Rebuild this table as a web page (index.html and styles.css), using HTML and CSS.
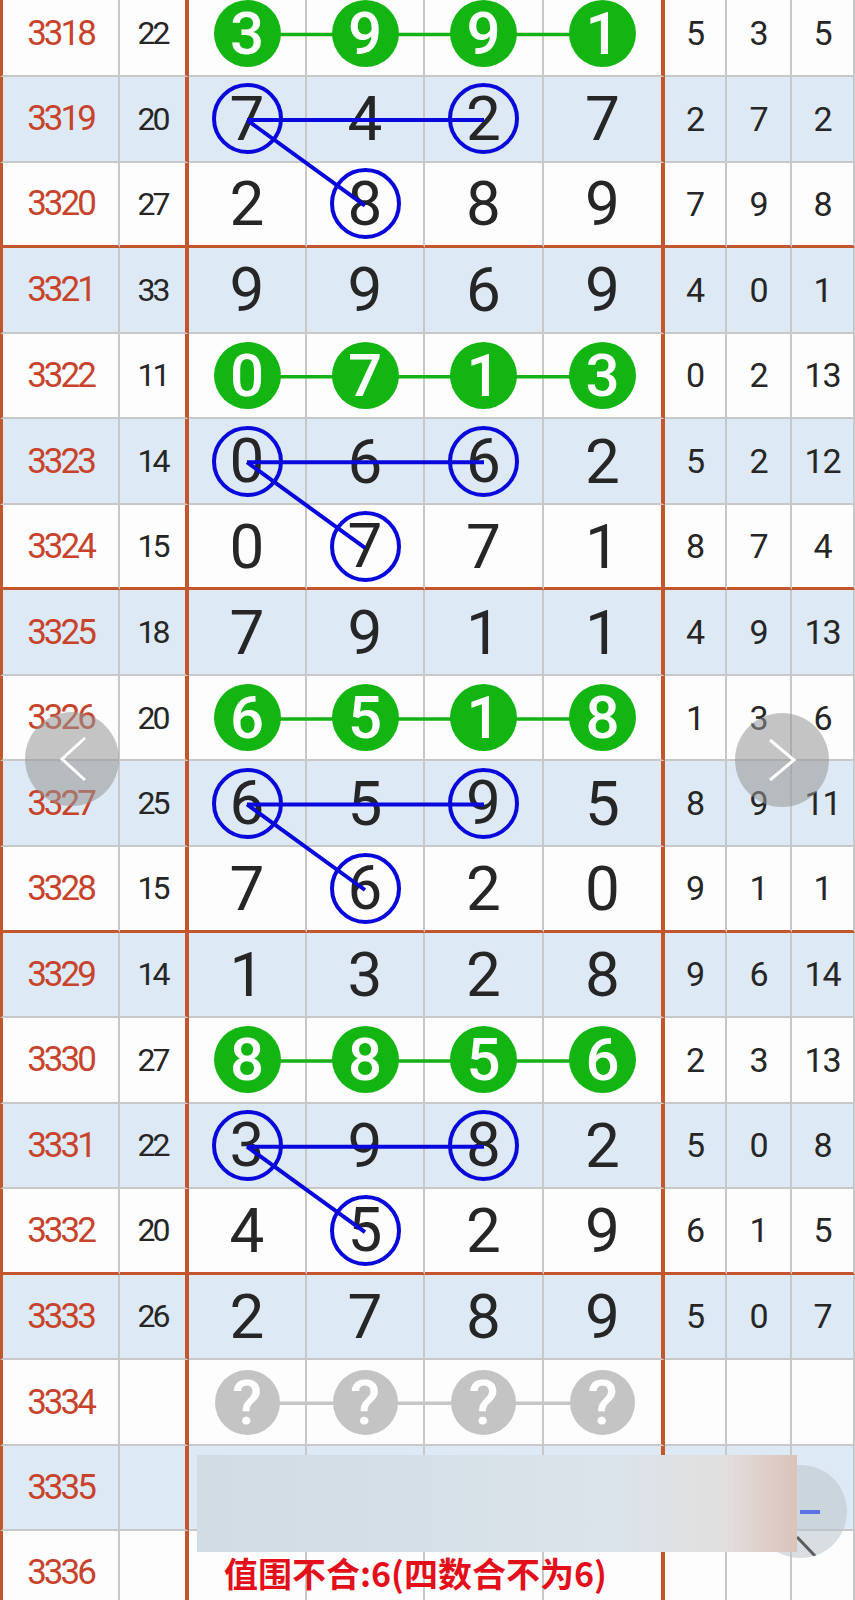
FILE: index.html
```html
<!DOCTYPE html>
<html lang="zh-CN">
<head>
    <meta charset="UTF-8">
    <meta name="viewport" content="width=device-width, initial-scale=1.0">
    <title>走势图</title>
    <link rel="stylesheet" href="styles.css">
</head>
<body>
    <div class="chart-wrap">
        <div class="chart">
            <div class="row"><div class="no">3318</div><div class="sum">22</div><div class="d"><span class="ball">3</span></div><div class="d"><span class="ball">9</span></div><div class="d"><span class="ball">9</span></div><div class="d last"><span class="ball">1</span></div><div class="s">5</div><div class="s">3</div><div class="s">5</div></div>
            <div class="row alt"><div class="no">3319</div><div class="sum">20</div><div class="d"><span class="ring">7</span></div><div class="d">4</div><div class="d"><span class="ring">2</span></div><div class="d last">7</div><div class="s">2</div><div class="s">7</div><div class="s">2</div></div>
            <div class="row end"><div class="no">3320</div><div class="sum">27</div><div class="d">2</div><div class="d"><span class="ring">8</span></div><div class="d">8</div><div class="d last">9</div><div class="s">7</div><div class="s">9</div><div class="s">8</div></div>

            <div class="row alt"><div class="no">3321</div><div class="sum">33</div><div class="d">9</div><div class="d">9</div><div class="d">6</div><div class="d last">9</div><div class="s">4</div><div class="s">0</div><div class="s">1</div></div>
            <div class="row"><div class="no">3322</div><div class="sum">11</div><div class="d"><span class="ball">0</span></div><div class="d"><span class="ball">7</span></div><div class="d"><span class="ball">1</span></div><div class="d last"><span class="ball">3</span></div><div class="s">0</div><div class="s">2</div><div class="s">13</div></div>
            <div class="row alt"><div class="no">3323</div><div class="sum">14</div><div class="d"><span class="ring">0</span></div><div class="d">6</div><div class="d"><span class="ring">6</span></div><div class="d last">2</div><div class="s">5</div><div class="s">2</div><div class="s">12</div></div>
            <div class="row end"><div class="no">3324</div><div class="sum">15</div><div class="d">0</div><div class="d"><span class="ring">7</span></div><div class="d">7</div><div class="d last">1</div><div class="s">8</div><div class="s">7</div><div class="s">4</div></div>

            <div class="row alt"><div class="no">3325</div><div class="sum">18</div><div class="d">7</div><div class="d">9</div><div class="d">1</div><div class="d last">1</div><div class="s">4</div><div class="s">9</div><div class="s">13</div></div>
            <div class="row"><div class="no">3326</div><div class="sum">20</div><div class="d"><span class="ball">6</span></div><div class="d"><span class="ball">5</span></div><div class="d"><span class="ball">1</span></div><div class="d last"><span class="ball">8</span></div><div class="s">1</div><div class="s">3</div><div class="s">6</div></div>
            <div class="row alt"><div class="no">3327</div><div class="sum">25</div><div class="d"><span class="ring">6</span></div><div class="d">5</div><div class="d"><span class="ring">9</span></div><div class="d last">5</div><div class="s">8</div><div class="s">9</div><div class="s">11</div></div>
            <div class="row end"><div class="no">3328</div><div class="sum">15</div><div class="d">7</div><div class="d"><span class="ring">6</span></div><div class="d">2</div><div class="d last">0</div><div class="s">9</div><div class="s">1</div><div class="s">1</div></div>

            <div class="row alt"><div class="no">3329</div><div class="sum">14</div><div class="d">1</div><div class="d">3</div><div class="d">2</div><div class="d last">8</div><div class="s">9</div><div class="s">6</div><div class="s">14</div></div>
            <div class="row"><div class="no">3330</div><div class="sum">27</div><div class="d"><span class="ball">8</span></div><div class="d"><span class="ball">8</span></div><div class="d"><span class="ball">5</span></div><div class="d last"><span class="ball">6</span></div><div class="s">2</div><div class="s">3</div><div class="s">13</div></div>
            <div class="row alt"><div class="no">3331</div><div class="sum">22</div><div class="d"><span class="ring">3</span></div><div class="d">9</div><div class="d"><span class="ring">8</span></div><div class="d last">2</div><div class="s">5</div><div class="s">0</div><div class="s">8</div></div>
            <div class="row end"><div class="no">3332</div><div class="sum">20</div><div class="d">4</div><div class="d"><span class="ring">5</span></div><div class="d">2</div><div class="d last">9</div><div class="s">6</div><div class="s">1</div><div class="s">5</div></div>

            <div class="row alt"><div class="no">3333</div><div class="sum">26</div><div class="d">2</div><div class="d">7</div><div class="d">8</div><div class="d last">9</div><div class="s">5</div><div class="s">0</div><div class="s">7</div></div>
            <div class="row"><div class="no">3334</div><div class="sum"></div><div class="d"><span class="ball q">?</span></div><div class="d"><span class="ball q">?</span></div><div class="d"><span class="ball q">?</span></div><div class="d last"><span class="ball q">?</span></div><div class="s"></div><div class="s"></div><div class="s"></div></div>
            <div class="row alt"><div class="no">3335</div><div class="sum"></div><div class="d"></div><div class="d"></div><div class="d"></div><div class="d last"></div><div class="s"></div><div class="s"></div><div class="s"></div></div>
            <div class="row end"><div class="no">3336</div><div class="sum"></div><div class="d"></div><div class="d"></div><div class="d"></div><div class="d last"></div><div class="s"></div><div class="s"></div><div class="s"></div></div>
        </div>

        <!-- connecting lines between marked numbers -->
        <svg class="links" width="855" height="1626">
            <g stroke="#14b214" stroke-width="3.5">
                <path d="M247 42.5 H603"/>
                <path d="M247 384.7 H603"/>
                <path d="M247 726.9 H603"/>
                <path d="M247 1069.1 H603"/>
            </g>
            <path d="M247 1411.3 H603" stroke="#c6c6c6" stroke-width="3.5"/>
            <g stroke="#0808dc" stroke-width="4" fill="none">
                <path d="M247 128.05 H484 M247 128.05 L365 213.6"/>
                <path d="M247 470.25 H484 M247 470.25 L365 555.8"/>
                <path d="M247 812.45 H484 M247 812.45 L365 898"/>
                <path d="M247 1154.65 H484 M247 1154.65 L365 1240.2"/>
            </g>
        </svg>
    </div>

    <a class="nav prev"><svg width="94" height="94"><polyline points="60,26 37,47 60,68" fill="none" stroke="#fff" stroke-width="3"/></svg></a>
    <a class="nav next"><svg width="94" height="94"><polyline points="35,27 59,47 35,67" fill="none" stroke="#fff" stroke-width="3"/></svg></a>

    <div class="fab"><svg width="93" height="93"><path d="M46 47 H66" stroke="#5b72e0" stroke-width="4"/><path d="M43 72 L63 93" stroke="#5c5c5c" stroke-width="3"/></svg></div>
    <div class="toast"></div>
    <p class="note">值围不合:6(四数合不为6)</p>
</body>
</html>
```

FILE: styles.css
```css
html, body {
    overflow: hidden;
}
body {
    margin: 0;
    width: 855px;
    height: 1600px;
    position: relative;
    background: #fdfdfd;
    font-family: Roboto, "Noto Sans", sans-serif;
}
.chart-wrap {
    position: relative;
    margin-top: -8.5px;
}
.chart {
    display: grid;
    grid-template-columns: 120px 69px 118px 118px 119px 121px 62px 65px 63px;
    grid-auto-rows: 85.55px;
}
.row { display: contents; }
.row > div {
    box-sizing: border-box;
    display: flex;
    align-items: center;
    justify-content: center;
    background: #fdfdfd;
    color: #262626;
    border-right: 2px solid #c8c8c8;
    border-bottom: 2px solid #c8c8c8;
}
.row.alt > div { background: #dde9f4; }
.row.end > div { border-bottom: 3px solid #c4562e; }
.row > .no {
    border-left: 3px solid #c4562e;
    color: #c8432b;
    font-size: 35px;
    letter-spacing: -3px;
}
.row > .sum {
    border-right: 4px solid #c4562e;
    font-size: 32px;
    letter-spacing: -3px;
}
.row > .d { font-size: 62px; }
.row > .d.last { border-right: 4px solid #c4562e; }
.row > .s { font-size: 34px; letter-spacing: -1px; }

.ball {
    position: relative;
    z-index: 2;
    width: 67px;
    height: 67px;
    border-radius: 50%;
    background: #13b513;
    color: #fff;
    font-size: 60px;
    font-weight: 500;
    line-height: 67px;
    text-align: center;
}
.ball.q {
    width: 65px;
    height: 65px;
    line-height: 66px;
    background: #c4c4c4;
    font-size: 62px;
    font-weight: 500;
}
.ring {
    box-sizing: border-box;
    width: 71px;
    height: 71px;
    border: 4px solid #0808dc;
    border-radius: 50%;
    display: flex;
    align-items: center;
    justify-content: center;
    line-height: 1;
}
.links {
    position: absolute;
    left: 0;
    top: 0;
    z-index: 1;
    pointer-events: none;
}

.nav {
    position: absolute;
    z-index: 3;
    width: 94px;
    height: 94px;
    border-radius: 50%;
    background: rgba(150, 150, 150, 0.55);
}
.nav svg { display: block; }
.prev { left: 25px; top: 712px; }
.next { left: 735px; top: 713px; }

.fab {
    position: absolute;
    z-index: 3;
    left: 754px;
    top: 1465px;
    width: 93px;
    height: 93px;
    border-radius: 50%;
    background: rgba(185, 196, 204, 0.55);
    overflow: hidden;
}
.fab svg { display: block; }
.toast {
    position: absolute;
    z-index: 4;
    left: 197px;
    top: 1455px;
    width: 600px;
    height: 97px;
    background: linear-gradient(90deg, #d1dce5 0%, #d6e0e8 40%, #dbe4ea 70%, #e2dfde 88%, #dbc3b9 100%);
}
.note {
    position: absolute;
    z-index: 4;
    left: 224px;
    top: 1556px;
    margin: 0;
    font-family: "Noto Sans CJK SC", sans-serif;
    font-size: 34px;
    font-weight: 700;
    line-height: 1;
    color: #e3101c;
}
```
